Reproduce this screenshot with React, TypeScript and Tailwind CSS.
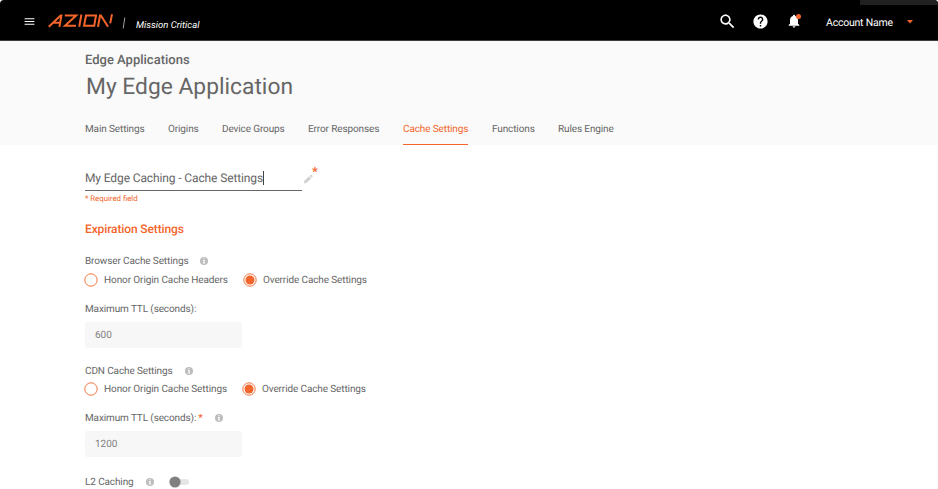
import React from "react";

const MENU_ICON = "M3 18h18v-2H3v2zm0-5h18v-2H3v2zm0-7v2h18V6H3z";
const SEARCH_ICON =
  "M15.5 14h-.79l-.28-.27C15.41 12.59 16 11.11 16 9.5 16 5.91 13.09 3 9.5 3S3 5.91 3 9.5 5.91 16 9.5 16c1.61 0 3.09-.59 4.23-1.57l.27.28v.79l5 4.99L20.49 19l-4.99-5zm-6 0C7.01 14 5 11.99 5 9.5S7.01 5 9.5 5 14 7.01 14 9.5 11.99 14 9.5 14z";
const HELP_ICON =
  "M12 2C6.48 2 2 6.48 2 12s4.48 10 10 10 10-4.48 10-10S17.52 2 12 2zm1 17h-2v-2h2v2zm2.07-7.75l-.9.92C13.45 12.9 13 13.5 13 15h-2v-.5c0-1.1.45-2.1 1.17-2.83l1.24-1.26c.37-.36.59-.86.59-1.41 0-1.1-.9-2-2-2s-2 .9-2 2H8c0-2.21 1.79-4 4-4s4 1.79 4 4c0 .88-.36 1.68-.93 2.25z";
const BELL_ICON =
  "M12 22c1.1 0 2-.9 2-2h-4c0 1.1.89 2 2 2zm6-6v-5c0-3.07-1.64-5.64-4.5-6.32V4c0-.83-.67-1.5-1.5-1.5s-1.5.67-1.5 1.5v.68C7.63 5.36 6 7.92 6 11v5l-2 2v1h16v-1l-2-2z";

function Icon({ d, className }: { d: string; className: string }) {
  return (
    <svg viewBox="0 0 24 24" fill="currentColor" className={"shrink-0 " + className}>
      <path d={d} />
    </svg>
  );
}

function Logo() {
  return (
    <svg viewBox="0 0 66 14" className="mt-px ml-[12px] h-[14px] w-[66px] shrink-0" fill="none" stroke="#f3652b" strokeWidth="2">
      <path d="M.8 12.8L12.6 1.5H13.4L11.4 12.8M5.5 8.7H12" />
      <path d="M16.8 1.5H28.2L17 11.8H28" />
      <path d="M33.4 .5L31.2 12.8" />
      <path d="M38 1.5H48L46.2 11.8H36Z" />
      <path d="M50 12.8L52 1.5H52.9L60 12.8M64 .3L62.2 9.4" />
    </svg>
  );
}

function Info({ className }: { className: string }) {
  return (
    <svg viewBox="0 0 8 8" className={"h-2 w-2 shrink-0 " + className}>
      <circle cx="4" cy="4" r="4" fill="#bdbdbd" />
      <path d="M3.4 1.2h1.2v1H3.4zM3 3.1h1.6v2.6h.5v.8H2.9v-.8h.5V3.9H3z" fill="#fff" />
    </svg>
  );
}

function Radio({ checked }: { checked?: boolean }) {
  return (
    <svg viewBox="0 0 14 14" className="-ml-px h-3.5 w-3.5 shrink-0">
      <circle cx="7" cy="7" r="6.2" fill="#fff" stroke="#f3652b" strokeWidth=".9" />
      {checked && <circle cx="7" cy="7" r="4.5" fill="#f3652b" />}
    </svg>
  );
}

const tabs = [
  { label: "Main Settings", width: "w-[83px]" },
  { label: "Origins", width: "w-[54px]" },
  { label: "Device Groups", width: "w-[86px]" },
  { label: "Error Responses", width: "w-[95px]" },
  { label: "Cache Settings", width: "w-[89px]", active: true },
  { label: "Functions", width: "w-[66px]" },
  { label: "Rules Engine", width: "w-[60px]" },
];

function RadioRow({ first, gap }: { first: string; gap: string }) {
  return (
    <div className="flex h-5 items-center">
      <Radio />
      <span className={"ml-1.5 pt-[2px] tracking-[-0.1px] " + gap}>{first}</span>
      <Radio checked />
      <span className="ml-1.5 pt-[2px]">Override Cache Settings</span>
    </div>
  );
}

export default function App() {
  return (
    <div className="h-[489px] w-[938px] overflow-hidden bg-white font-['Roboto',sans-serif] text-[10px] leading-none tracking-[-0.12px] text-[#666] whitespace-nowrap [text-rendering:geometricPrecision]">
      <header className="relative flex h-[41px] items-center rounded-t-[4px] border-b border-[#3c3c3c] bg-black pl-[23px] text-white">
        <div className="absolute top-0 right-0 h-[5px] w-[78px] rounded-tr-[4px] bg-[#212121]" />
        <Icon d={MENU_ICON} className="mt-[2px] h-[13px] w-[13px]" />
        <Logo />
        <svg viewBox="0 0 4 12" className="mt-[5px] ml-[8px] h-3 w-1 shrink-0">
          <path d="M2.8 .5L1.2 11.5" stroke="#ccc" strokeWidth=".8" />
        </svg>
        <span className="mt-[11px] ml-[10px] w-[582px] text-[9.5px] tracking-normal italic">Mission Critical</span>
        <Icon d={SEARCH_ICON} className="mt-[2px] h-[19px] w-[19px]" />
        <Icon d={HELP_ICON} className="mt-[2px] ml-[15px] h-[17px] w-[17px]" />
        <div className="relative mt-px ml-[17px] h-4 w-4">
          <Icon d={BELL_ICON} className="h-4 w-4" />
          <span className="absolute top-[1px] right-[1px] h-[5px] w-[5px] rounded-full bg-[#f3652b]" />
        </div>
        <span className="mt-[6px] ml-[24px] w-[81px] text-[10.5px] tracking-[-0.22px]">Account Name</span>
        <svg viewBox="0 0 6 4" className="mt-[3px] h-1 w-1.5">
          <path d="M0 0H6L3 3.5Z" fill="#f3652b" />
        </svg>
      </header>

      <section className="h-[104px] bg-[#fafafa] pl-[85px]">
        <div className="flex h-[37px] items-center pt-[2px] text-[13px] font-medium tracking-normal">Edge Applications</div>
        <h1 className="flex h-[18px] items-center pl-px text-[22.8px] tracking-normal">My Edge Application</h1>
        <nav className="mt-[24px] flex h-[25px]">
          {tabs.map((t) => (
            <div key={t.label} className={t.width}>
              <span className={t.active ? "inline-flex h-[25px] items-center border-b border-[#f3652b] pb-[5px] text-[#f3652b]" : "inline-flex h-[25px] items-center pb-[6px]"}>
                {t.label}
              </span>
            </div>
          ))}
        </nav>
      </section>

      <main className="pl-[85px]">
        <div className="flex h-[46px] items-start pt-[21px]">
          <div className="flex h-[25px] w-[217px] items-center border-b border-[#666] text-[12px]">
            <span>My Edge Caching - Cache Settings</span>
            <span className="h-3.5 w-px bg-[#444]" />
          </div>
          <svg viewBox="0 0 10 10" className="mt-[8px] ml-[1px] h-[10px] w-[10px]" fill="#d0d0d0">
            <path d="M1 9.4L1.3 6.8 6.2 2.2 8.2 4.4 3.3 9zM6.8 1.7L7.7 .9Q8.3.5 8.9 1.1L9.4 1.7Q9.9 2.4 9.4 3L8.7 3.8z" />
          </svg>
          <span className="-ml-px text-[13px] font-medium text-[#f3652b]">*</span>
        </div>
        <div className="flex h-[14px] items-center pt-px text-[7.8px] tracking-normal text-[#f3652b]">* Required field</div>
        <h2 className="mt-[14px] flex h-5 items-center text-[12px] font-medium text-[#f3652b]">Expiration Settings</h2>

        <div className="mt-[12px] flex h-5 items-center">
          <span className="pt-[2px]">Browser Cache Settings</span>
          <Info className="ml-3" />
        </div>
        <div className="-mt-px"><RadioRow first="Honor Origin Cache Headers" gap="w-[140px]" /></div>
        <div className="mt-[9px] flex h-5 items-center pt-[2px]">Maximum TTL (seconds):</div>
        <div className="mt-[3px] flex h-[26px] w-[157px] items-center rounded-[2px] bg-[#f7f7f7] pt-[2px] pl-[10px] tracking-normal text-[#808080]">600</div>

        <div className="mt-[13px] flex h-5 items-center">
          <span className="pt-[2px]">CDN Cache Settings</span>
          <Info className="ml-3" />
        </div>
        <div className="-mt-[2px]"><RadioRow first="Honor Origin Cache Settings" gap="w-[139px]" /></div>
        <div className="mt-[9px] flex h-5 items-center">
          <span className="pt-[2px]">Maximum TTL (seconds):</span>
          <span className="ml-[2px] pt-[2px] font-medium text-[#f3652b]">*</span>
          <Info className="ml-3" />
        </div>
        <div className="mt-[3px] flex h-[26px] w-[157px] items-center rounded-[2px] bg-[#f7f7f7] pt-[2px] pl-[10px] tracking-normal text-[#808080]">1200</div>

        <div className="mt-[15px] flex h-5 items-center">
          <span className="pt-[2px]">L2 Caching</span>
          <Info className="ml-3" />
          <svg viewBox="0 0 20 12" className="ml-[15px] h-3 w-5">
            <rect x="4" y="3" width="16" height="6" rx="3" fill="#e6e6e6" />
            <circle cx="6" cy="6" r="5.6" fill="#808080" />
          </svg>
        </div>
      </main>
    </div>
  );
}
